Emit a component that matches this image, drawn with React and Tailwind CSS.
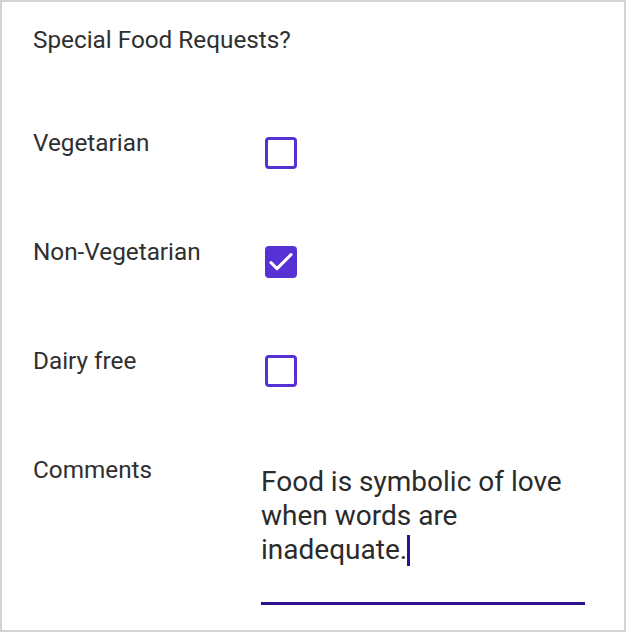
// Special food requests form card

const OPTIONS = [
  { label: 'Vegetarian', checked: false },
  { label: 'Non-Vegetarian', checked: true },
  { label: 'Dairy free', checked: false },
];

const Checkbox = ({ checked }) =>
  checked ? (
    <div className="w-[32px] h-[32px] rounded-[4px] bg-[#5632d4] flex items-center justify-center">
      <svg width="32" height="32" viewBox="0 0 24 24" fill="none">
        <path d="M4.5 12.5l4.5 4.5L19.5 6.5" stroke="#fff" strokeWidth="2.3" strokeLinecap="round" strokeLinejoin="round" />
      </svg>
    </div>
  ) : (
    <div className="w-[32px] h-[32px] rounded-[4px] border-[3px] border-[#5632d4] bg-white" />
  );

export default function App() {
  return (
    <div
      className="w-[626px] h-[632px] border-2 border-[#d3d3d3] bg-white text-[#2f2f2f]"
      style={{ fontFamily: 'Roboto, "Liberation Sans", sans-serif' }}
    >
      <div className="pl-[31px] pt-[24px]">
        <h2 className="text-[24.3px] leading-[28px]">Special Food Requests?</h2>

        <div className="mt-[75px] flex flex-col gap-[69px]">
          {OPTIONS.map((o) => (
            <div key={o.label} className="flex">
              <div className="w-[228px] text-[24.3px] leading-[28px]">{o.label}</div>
              <div className="pt-[8px] pl-[4px]">
                <Checkbox checked={o.checked} />
              </div>
            </div>
          ))}

          <div className="flex">
            <div className="w-[228px] text-[24.3px] leading-[28px]">Comments</div>
            <div className="w-[324px] pt-[9px]">
              <p className="text-[28px] leading-[34px] text-[#2b2b2b]">
                Food is symbolic of love when words are inadequate.
                <span className="inline-block w-[3px] h-[31px] bg-[#2d1190] align-[-7px]" />
              </p>
              <div className="mt-[35px] h-[3px] bg-[#2d1190]" />
            </div>
          </div>
        </div>
      </div>
    </div>
  );
}
